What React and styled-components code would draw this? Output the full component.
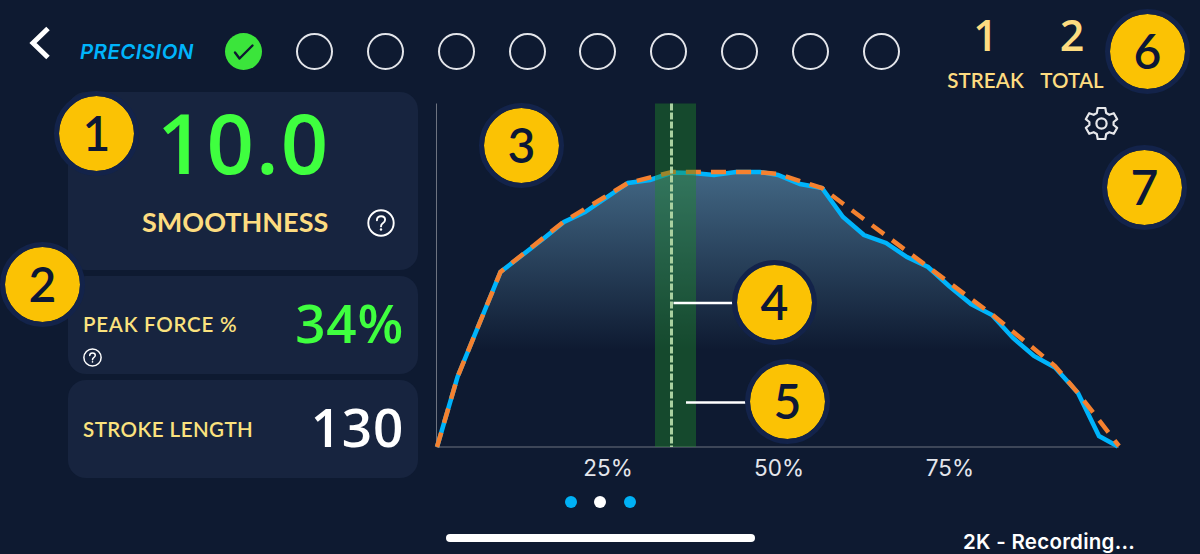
import React from 'react';
import styled, { createGlobalStyle, css } from 'styled-components';

const GlobalStyle = createGlobalStyle`
    * {
        box-sizing: border-box;
    }

    body {
        margin: 0;
        background-color: #0e1a31;
    }
`;

const Screen = styled.div`
    position: relative;
    width: 1200px;
    height: 554px;
    overflow: hidden;
    display: flex;
    flex-direction: column;
    background-color: #0e1a31;
    color: #ffffff;
    font-family: 'Open Sans', sans-serif;
    white-space: nowrap;
`;

const Header = styled.header`
    display: flex;
    height: 92px;
    padding-left: 29px;
`;

const BackButton = styled.button`
    width: 51px;
    height: 92px;
    padding: 0;
    border: none;
    background: none;
    text-align: left;

    svg {
        display: block;
        margin-top: -7px;
    }
`;

const Mode = styled.h1`
    width: 145px;
    margin: 0;
    color: #00b4fb;
    font-family: Inter, sans-serif;
    font-size: 20.5px;
    font-style: italic;
    font-weight: 600;
    line-height: 103px;
    letter-spacing: 0.4px;
`;

const Steps = styled.div`
    display: flex;
    gap: 33.9px;
    margin-top: 33px;
`;

const Step = styled.div`
    display: flex;
    align-items: center;
    justify-content: center;
    width: 37px;
    height: 37px;
    border-radius: 50%;
    ${({ $done }) => $done ? css`background-color: #3be53b;` : css`border: 2px solid #e3e5ea;`}
`;

const Stats = styled.div`
    display: flex;
    gap: 16px;
    margin-left: 47px;
`;

const Stat = styled.div`
    width: ${({ $width }) => $width}px;
    color: #fddc80;
    text-align: center;
`;

const StatValue = styled.div`
    margin-top: 6px;
    font-size: 43px;
    font-weight: 600;
    line-height: 58px;
`;

const StatLabel = styled.div`
    font-family: Lato, sans-serif;
    font-size: 20.5px;
    font-weight: 600;
    line-height: 33px;
    letter-spacing: 0.1px;
`;

const Body = styled.main`
    display: flex;
    height: 386px;
    padding-left: 68px;
`;

const Cards = styled.section`
    display: flex;
    flex-direction: column;
    gap: 6.5px;
    width: 350px;
`;

const Card = styled.div`
    display: flex;
    align-items: center;
    justify-content: space-between;
    height: 98px;
    padding: 0 15px;
    border-radius: 18px;
    background-color: #17243f;
`;

const ScoreCard = styled(Card)`
    height: 178px;
    flex-direction: column;
    align-items: stretch;
    justify-content: flex-start;
`;

const Score = styled.div`
    height: 104px;
    padding-left: 74px;
    color: #3fff3f;
    font-size: 83px;
    font-weight: 600;
    line-height: 100px;
    letter-spacing: 2px;
`;

const ScoreRow = styled.div`
    display: flex;
    align-items: center;
    justify-content: space-between;
    height: 54px;
    padding: 0 8px 0 59px;
`;

const ScoreLabel = styled.div`
    padding-bottom: 4px;
    color: #fddc80;
    font-family: Lato, sans-serif;
    font-size: 27px;
    font-weight: 700;
`;

const MetricInfo = styled.div`
    display: flex;
    flex-direction: column;
    gap: 13px;
    padding-top: 30px;
`;

const MetricLabel = styled.div`
    color: #fbe27e;
    font-family: Lato, sans-serif;
    font-size: 20.5px;
    font-weight: 600;
    line-height: 22px;
    letter-spacing: ${({ $spacing }) => $spacing || 0}px;
`;

const MetricValue = styled.div`
    margin-right: -1px;
    padding-bottom: 5px;
    color: ${({ $good }) => $good ? '#3fff3f' : '#ffffff'};
    font-size: 53px;
    font-weight: 600;
    letter-spacing: 0.8px;
`;

const Chart = styled.section`
    width: 782px;
`;

const Plot = styled.svg`
    display: block;
`;

const Ticks = styled.div`
    display: flex;
    padding-left: 104.5px;
`;

const Tick = styled.div`
    width: 171px;
    color: #e4e6ec;
    font-family: Inter, sans-serif;
    font-size: 22.5px;
    line-height: 28px;
    text-align: center;
`;

const Pager = styled.nav`
    display: flex;
    justify-content: center;
    gap: 17.5px;
    height: 56px;
    padding-top: 18px;
`;

const PageDot = styled.span`
    width: 12px;
    height: 12px;
    border-radius: 50%;
    background-color: ${({ $current }) => $current ? '#ffffff' : '#00b1f5'};
`;

const Footer = styled.footer`
    display: flex;
    height: 20px;
    padding-left: 446px;
`;

const HomeBar = styled.div`
    width: 309px;
    height: 8px;
    border-radius: 4px;
    background-color: #ffffff;
`;

const Status = styled.div`
    margin: -4px 0 0 208px;
    font-family: Inter, sans-serif;
    font-size: 20.5px;
    font-weight: 600;
    line-height: 24px;
    letter-spacing: 0.27px;
`;

const Settings = styled.svg`
    position: absolute;
    left: 1084px;
    top: 106px;
`;

const Marker = styled.div`
    position: absolute;
    left: ${({ $x }) => $x - 42}px;
    top: ${({ $y }) => $y - 42}px;
    width: 85px;
    height: 85px;
    border: 5px solid #13234a;
    border-radius: 50%;
    background-color: #fbc204;
    background-clip: padding-box;
    color: #0c1736;
    font-family: Lato, sans-serif;
    font-size: 48px;
    font-weight: 600;
    line-height: 74px;
    text-align: center;
`;

const HelpIcon = ({ size, stroke }) => (
    <svg width={size} height={size} viewBox="0 0 28 28" fill="none" stroke="#ffffff" strokeWidth={stroke}>
        <circle cx="14" cy="14" r="12.7" />
        <path d="M9.9 11.2c0-2.5 1.7-4 4.2-4 2.4 0 4 1.5 4 3.6 0 1.8-1 2.6-2.3 3.5-1.3.9-1.8 1.6-1.8 3.1" strokeLinecap="round" />
        <circle cx="14" cy="20.5" r="1.2" fill="#ffffff" stroke="none" />
    </svg>
);

const force = '437,447 457.5,377 500.5,272 543,239 564,222 585,212 628,183 650,180 672,172.5 693,173 714,175 736,172 760,172 778,175 800,184 822,188 843,217 864,235 886,243 907,257 928,267 949,286 971,304 992,315 1013,338 1034,356 1055,367.5 1078,393 1099,436 1118,446.5';
const ideal = '437,447 457.5,377 500.5,272 564,221.5 628,183 672,172 757,172 778,174 822,188 992,314.5 1055,366 1078,393 1119,446';

const markers = [
    [96, 133], [42, 284], [521, 145], [774, 302], [787, 401], [1147, 51], [1144, 187]
];

const App = () => (
    <>
        <GlobalStyle />
        <Screen>
            <Header>
                <BackButton aria-label="Back">
                    <svg width="22" height="98" viewBox="29 -7 22 98" fill="none">
                        <path d="M48 27.5 L33 42 L48 56.5" stroke="#ffffff" strokeWidth="5" />
                    </svg>
                </BackButton>
                <Mode>PRECISION</Mode>
                <Steps>
                    <Step $done>
                        <svg width="22" height="18" viewBox="0 0 22 18" fill="none">
                            <path d="M2 9.5 L6.5 15.5 L19.5 2.5" stroke="#0e1a31" strokeWidth="2.4" strokeLinecap="round" strokeLinejoin="round" />
                        </svg>
                    </Step>
                    {[...Array(9)].map((_, index) => <Step key={index} />)}
                </Steps>
                <Stats>
                    <Stat $width={77}>
                        <StatValue>1</StatValue>
                        <StatLabel>STREAK</StatLabel>
                    </Stat>
                    <Stat $width={64}>
                        <StatValue>2</StatValue>
                        <StatLabel>TOTAL</StatLabel>
                    </Stat>
                </Stats>
            </Header>
            <Body>
                <Cards>
                    <ScoreCard>
                        <Score>10.0</Score>
                        <ScoreRow>
                            <ScoreLabel>SMOOTHNESS</ScoreLabel>
                            <HelpIcon size={28} stroke={1.9} />
                        </ScoreRow>
                    </ScoreCard>
                    <Card>
                        <MetricInfo>
                            <MetricLabel $spacing={0.75}>PEAK FORCE %</MetricLabel>
                            <HelpIcon size={19} stroke={2.2} />
                        </MetricInfo>
                        <MetricValue $good>34%</MetricValue>
                    </Card>
                    <Card>
                        <MetricLabel $spacing={0.45}>STROKE LENGTH</MetricLabel>
                        <MetricValue>130</MetricValue>
                    </Card>
                </Cards>
                <Chart>
                    <Plot width="782" height="362" viewBox="418 92 782 362" fill="none">
                        <defs>
                            <linearGradient id="fill" gradientUnits="userSpaceOnUse" x1="0" y1="172" x2="0" y2="350">
                                <stop offset="0" stopColor="#426784" />
                                <stop offset="1" stopColor="#426784" stopOpacity="0" />
                            </linearGradient>
                        </defs>
                        <path d="M436.5 103.5V447H1119" stroke="#6d7380" strokeWidth="1" />
                        <polygon points={force} fill="url(#fill)" />
                        <polyline points={force} stroke="#00b4fb" strokeWidth="4.5" />
                        <polyline points={ideal} stroke="#f5812f" strokeWidth="4.5" strokeDasharray="15.03 10.06" />
                        <rect x="655" y="103.5" width="41" height="343.5" fill="#208a29" fillOpacity="0.42" />
                        <path d="M671.5 103.5V447" stroke="#a9d0a0" strokeWidth="3" strokeDasharray="7 2" />
                        <path d="M673.5 303H735M686 402.5H748" stroke="#ffffff" strokeWidth="2.5" />
                    </Plot>
                    <Ticks>
                        <Tick>25%</Tick>
                        <Tick>50%</Tick>
                        <Tick>75%</Tick>
                    </Ticks>
                </Chart>
            </Body>
            <Pager>
                <PageDot />
                <PageDot $current />
                <PageDot />
            </Pager>
            <Footer>
                <HomeBar />
                <Status>2K - Recording...</Status>
            </Footer>
            <Settings width="35" height="35" viewBox="0 0 35 35" fill="none" stroke="#e6e7ea" strokeWidth="2.2" strokeLinejoin="round">
                <path d="M13.7 2H21.3L22.2 7L25.3 8.8L29.8 7.2L33.2 13.2L29.6 16V19L33.2 21.8L29.8 27.8L25.3 26.2L22.2 28L21.3 33H13.7L12.8 28L9.7 26.2L5.2 27.8L1.8 21.8L5.4 19V16L1.8 13.2L5.2 7.2L9.7 8.8L12.8 7Z" />
                <circle cx="17.5" cy="17.5" r="5.1" />
            </Settings>
            {markers.map(([x, y], index) => (
                <Marker key={index} $x={x} $y={y}>{index + 1}</Marker>
            ))}
        </Screen>
    </>
);

export default App;
